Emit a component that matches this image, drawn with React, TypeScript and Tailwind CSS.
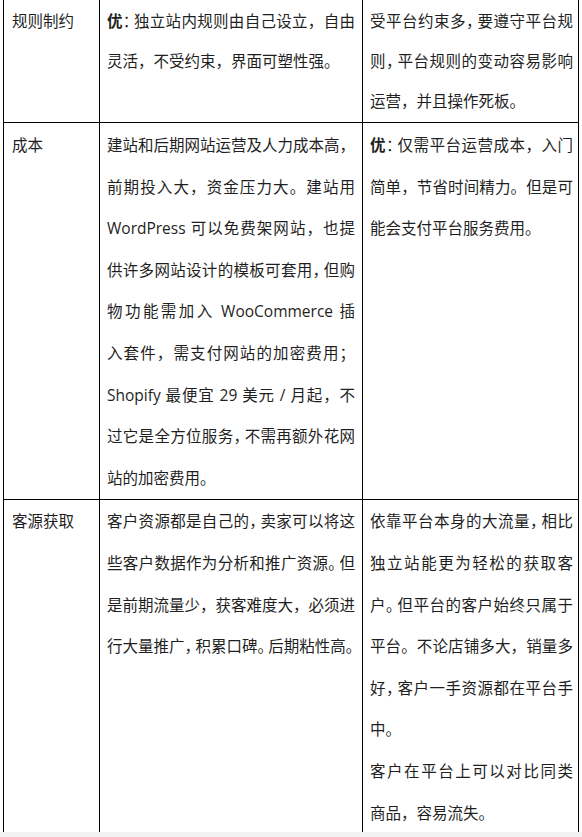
import React from "react";

const N = ({ c }: { c: string }) => <span className="tracking-[-0.3em]">{c}</span>;
const B = ({ c }: { c: string }) => <span className="font-bold">{c}</span>;

const L = ({ children, last }: { children: React.ReactNode; last?: boolean }) => (
  <div className={last ? "whitespace-nowrap" : "text-justify [text-align-last:justify]"}>{children}</div>
);

export default function App() {
  return (
    <div className="w-[582px] h-[837px] bg-white flex flex-col font-['Open_Sans','Noto_Sans_CJK_SC',sans-serif] text-[15.5px] text-[#1f1f1f]">
      <div className="h-[832px] overflow-hidden">
        <div className="ml-[3px] w-[576px] border-x border-black">
          {/* Row 1 */}
          <div className="flex border-b border-black leading-[40px]">
            <div className="w-[95px] pl-[8px] pt-[1px] pb-[1px]">规则制约</div>
            <div className="w-[263px] border-l border-black px-[7px] pt-[1px] pb-[1px]">
              <L>
                <B c="优" />
                <N c="：" />独立站内规则由自己设立，自由
              </L>
              <L last>灵活，不受约束，界面可塑性强。</L>
            </div>
            <div className="flex-1 border-l border-black pl-[7px] pr-[5px] pt-[1px] pb-[1px]">
              <L>
                受平台约束多<N c="，" />要遵守平台规
              </L>
              <L>
                则<N c="，" />平台规则的变动容易影响
              </L>
              <L last>运营，并且操作死板。</L>
            </div>
          </div>

          {/* Row 2 */}
          <div className="flex border-b border-black leading-[41.6px]">
            <div className="w-[95px] pl-[8px] pt-[2px]">成本</div>
            <div className="w-[263px] border-l border-black px-[7px] pt-[2px]">
              <L>建站和后期网站运营及人力成本高，</L>
              <L>前期投入大，资金压力大。建站用</L>
              <L>WordPress 可以免费架网站，也提</L>
              <L>
                供许多网站设计的模板可套用<N c="，" />但购
              </L>
              <L>物功能需加入 WooCommerce 插</L>
              <L>入套件，需支付网站的加密费用；</L>
              <L>Shopify 最便宜 29 美元 / 月起，不</L>
              <L>
                过它是全方位服务<N c="，" />不需再额外花网
              </L>
              <L last>站的加密费用。</L>
            </div>
            <div className="flex-1 border-l border-black pl-[7px] pr-[5px] pt-[2px]">
              <L>
                <B c="优" />
                <N c="：" />仅需平台运营成本，入门
              </L>
              <L>简单，节省时间精力。但是可</L>
              <L last>能会支付平台服务费用。</L>
            </div>
          </div>

          {/* Row 3 */}
          <div className="flex leading-[41.6px]">
            <div className="w-[95px] pl-[8px] pt-[1px]">客源获取</div>
            <div className="w-[263px] border-l border-black px-[7px] pt-[1px]">
              <L>
                客户资源都是自己的<N c="，" />卖家可以将这
              </L>
              <L>
                些客户数据作为分析和推广资源<N c="。" />但
              </L>
              <L>是前期流量少，获客难度大，必须进</L>
              <L last>
                行大量推广<N c="，" />积累口碑<N c="。" />后期粘性高。
              </L>
            </div>
            <div className="flex-1 border-l border-black pl-[7px] pr-[5px] pt-[1px]">
              <L>
                依靠平台本身的大流量<N c="，" />相比
              </L>
              <L>独立站能更为轻松的获取客</L>
              <L>
                户<N c="。" />但平台的客户始终只属于
              </L>
              <L>平台。不论店铺多大，销量多</L>
              <L>
                好<N c="，" />客户一手资源都在平台手
              </L>
              <L last>中。</L>
              <L>客户在平台上可以对比同类</L>
              <L last>商品，容易流失。</L>
              <div className="h-[40px]" />
            </div>
          </div>
        </div>
      </div>
      <div className="h-[5px] bg-[#f2f2f2]" />
    </div>
  );
}
